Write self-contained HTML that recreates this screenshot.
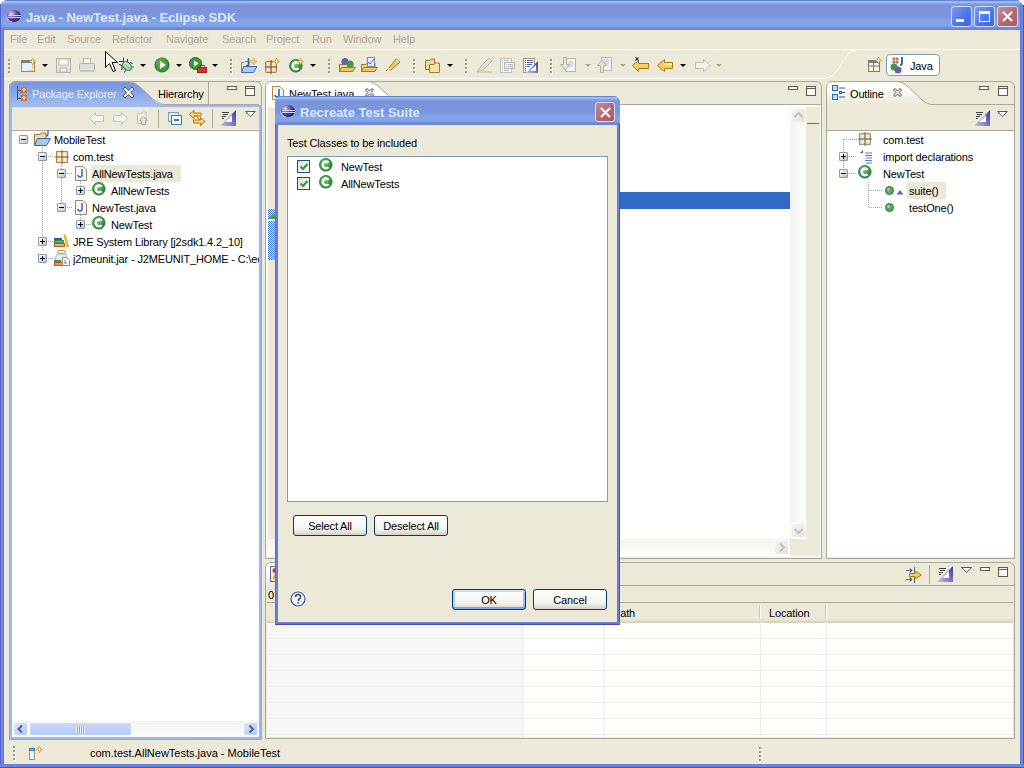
<!DOCTYPE html>
<html><head><meta charset="utf-8">
<style>
*{box-sizing:border-box;margin:0;padding:0}
html,body{width:1024px;height:768px;overflow:hidden;background:#ece9d8;font-family:"Liberation Sans",sans-serif;font-size:11px;color:#000}
.a{position:absolute}
svg.a{overflow:visible}
.t{position:absolute;white-space:nowrap;line-height:13px;letter-spacing:-0.15px}
#title{left:0;top:0;width:1024px;height:30px;background:linear-gradient(#6385d8 0px,#6385d8 1px,#a0b8e8 1px,#a0b8e8 3px,#88a6e3 3px,#7a94dd 5px,#7a94dd 16px,#80a6e8 21px,#80a6e8 26px,#7088da 28px,#6a80d6 30px);border-radius:7px 7px 0 0}
#lb{left:0;top:28px;width:4px;height:740px;background:linear-gradient(90deg,#5a64d0 0 1px,#6c84dc 1px 3px,#6078d8 3px)}
#rb{left:1020px;top:5px;width:4px;height:763px;background:linear-gradient(90deg,#6078d8 0 1px,#6c84dc 1px 3px,#4c50c0 3px)}
#bb{left:0;top:764px;width:1024px;height:4px;background:linear-gradient(#6a80dc 0 1px,#6c84dc 1px 3px,#4c50c0 3px)}
.menu{top:33px;color:#aca899}
.panel{position:absolute;border:1px solid #aca899;background:#ece9d8}
.white{position:absolute;background:#fff}
.wbtn{position:absolute;top:6px;width:21px;height:21px;border:1px solid #d4dcf4;border-radius:3px;background:linear-gradient(135deg,#7c9cf0,#4b74e6 60%,#3c68e0)}
.grip{position:absolute;width:2px;height:2px;border-radius:1px;background:#7d7a6e;box-shadow:1px 1px #fff,0 4px #7d7a6e,1px 5px #fff,0 8px #7d7a6e,1px 9px #fff,0 12px #7d7a6e,1px 13px #fff}
.dd{position:absolute;width:0;height:0;border-left:3px solid transparent;border-right:3px solid transparent;border-top:3px solid #000}
.ddg{border-top-color:#aca899}
.sep{position:absolute;width:1px;background:#aca899}
.bx{position:absolute;width:9px;height:9px;border:1px solid #7f9db9;border-radius:1px;background:linear-gradient(135deg,#fff,#c6c3b3)}
.bx::before{content:"";position:absolute;left:1px;top:3px;width:5px;height:1px;background:#000}
.bx.p::after{content:"";position:absolute;left:3px;top:1px;width:1px;height:5px;background:#000}
.dv{position:absolute;width:1px;background:repeating-linear-gradient(#a0a0a0 0 1px,transparent 1px 2px)}
.dh{position:absolute;height:1px;background:repeating-linear-gradient(90deg,#a0a0a0 0 1px,transparent 1px 2px)}
.minb{position:absolute;width:10px;height:4px;border:1px solid #5e5a50;background:#fff}
.maxb{position:absolute;width:10px;height:10px;border:1px solid #5e5a50;background:linear-gradient(#fff 0 1px,#5e5a50 1px 2px,#fff 2px)}
.btn{position:absolute;height:21px;border:1px solid #003c74;border-radius:3px;background:linear-gradient(#fff,#f3f3ef 70%,#d6d0c5);text-align:center;line-height:19px;padding-top:1px;letter-spacing:-0.15px}
.cb{position:absolute;width:13px;height:13px;border:1px solid #1c5180;background:linear-gradient(135deg,#dcdcd7,#fff)}
</style></head><body>
<svg width="0" height="0" style="position:absolute"><defs><radialGradient id="cg" cx=".4" cy=".35" r=".7"><stop offset="0" stop-color="#8cd08c"/><stop offset=".6" stop-color="#3a9a4a"/><stop offset="1" stop-color="#237a30"/></radialGradient>
<radialGradient id="eg" cx=".3" cy=".3" r=".8"><stop offset="0" stop-color="#f0e0f0"/><stop offset=".25" stop-color="#b080c0"/><stop offset=".5" stop-color="#5a4aa0"/><stop offset="1" stop-color="#1c1868"/></radialGradient>
<g id="eic"><ellipse cx="7" cy="6" rx="7" ry="6" fill="url(#eg)"/><path d="M0 6.5C0 9 2 12 5 12" stroke="#e0a0c8" stroke-width="1.5" fill="none" opacity=".8"/><rect x="1" y="5" width="13" height="1" fill="#c8d4f4"/><rect x="1" y="7" width="13" height="1" fill="#c8d4f4"/></g>
<g id="spk"><path d="M3.5 -0.3Q4.3 2.7 7.3 3.5Q4.3 4.3 3.5 7.3Q2.7 4.3 -0.3 3.5Q2.7 2.7 3.5 -0.3Z" fill="#c8961e"/><path d="M3.5 1.5V5.5M1.5 3.5H5.5" stroke="#fff6c8" stroke-width="1"/></g>
<g id="cic"><circle cx="6.8" cy="6.8" r="6.3" fill="url(#cg)" stroke="#2a7a36" stroke-width=".9"/><path d="M9.6 4.6A3.4 3.4 0 1 0 9.6 9.2" stroke="#fff" stroke-width="2.4" fill="none"/></g></defs></svg>
<!-- WINDOW FRAME -->
<div id="title" class="a"></div>
<div class="a" style="left:0;top:0;width:1px;height:3px;background:#fff"></div>
<svg class="a" style="left:7px;top:10px" width="15" height="13"><use href="#eic"/></svg>
<div class="t" style="left:26px;top:10px;letter-spacing:0;font-weight:bold;font-size:13px;line-height:15px;color:#dce6fa">Java - NewTest.java - Eclipse SDK</div>
<div class="wbtn" style="left:951px"><div class="a" style="left:4px;top:12px;width:8px;height:3px;background:#fff"></div></div>
<div class="wbtn" style="left:974px"><div class="a" style="left:4px;top:4px;width:11px;height:11px;border:1px solid #fff;border-top-width:3px"></div></div>
<div class="wbtn" style="left:997px;background:linear-gradient(135deg,#c98a9c,#b8646e 60%,#a85a60)"><svg class="a" style="left:4px;top:4px" width="11" height="11"><path d="M1 1L10 10M10 1L1 10" stroke="#fff" stroke-width="2"/></svg></div>
<div class="a" style="left:1019px;top:0;width:5px;height:5px;background:linear-gradient(45deg,transparent 50%,#fff 50%)"></div>
<div class="a" style="left:0;top:0;width:5px;height:5px;background:linear-gradient(-45deg,transparent 50%,#fff 50%)"></div>
<div class="a" style="left:0;top:4px;width:1px;height:24px;background:#5a64d0"></div><div id="lb" class="a"></div><div id="rb" class="a"></div><div id="bb" class="a"></div>

<!-- MENU -->
<div class="t menu" style="left:10px">File</div>
<div class="t menu" style="left:37px">Edit</div>
<div class="t menu" style="left:67px">Source</div>
<div class="t menu" style="left:112px">Refactor</div>
<div class="t menu" style="left:166px">Navigate</div>
<div class="t menu" style="left:222px">Search</div>
<div class="t menu" style="left:266px">Project</div>
<div class="t menu" style="left:312px">Run</div>
<div class="t menu" style="left:343px">Window</div>
<div class="t menu" style="left:393px">Help</div>
<div class="a" style="left:4px;top:49px;width:1016px;height:1px;background:#fff"></div>

<!-- TOOLBAR -->
<div class="a" style="left:4px;top:78px;width:819px;height:1px;background:#fff"></div>
<svg class="a" style="left:800px;top:49px" width="60" height="31"><path d="M22.5 29.5C32 29.5 36 24 42 14S50 1.5 56 1.5" stroke="#fff" fill="none"/></svg>
<div class="grip" style="left:8px;top:59px"></div>
<svg class="a" style="left:21px;top:58px" width="16" height="15"><rect x="0.5" y="2.5" width="13" height="11" fill="#e8f4fc" stroke="#9c8a5a"/><rect x="1" y="3" width="12" height="2" fill="#4a84c8"/><path d="M8 13C12 12 12 9 12 5" stroke="#f0c040" fill="none"/><use href="#spk" x="8" y="0"/></svg>
<div class="dd" style="left:42px;top:64px"></div>
<svg class="a" style="left:56px;top:58px" width="15" height="15"><rect x="0.5" y="0.5" width="14" height="14" fill="#e4e2da" stroke="#b4b2aa"/><rect x="3" y="1" width="9" height="6" fill="#f6f6f2" stroke="#c4c2ba"/><rect x="4" y="10" width="7" height="4" fill="#f0f0ee" stroke="#b8b6ae"/></svg>
<svg class="a" style="left:79px;top:58px" width="16" height="15"><rect x="4.5" y="0.5" width="7" height="7" fill="#fafafa" stroke="#b4b2aa"/><rect x="0.5" y="5.5" width="15" height="7" rx="1" fill="#e0ded6" stroke="#b4b2aa"/><rect x="1" y="12" width="14" height="2" fill="#c8c6be"/></svg>
<svg class="a" style="left:104px;top:50px" width="14" height="23"><path d="M1.5 1.5V17.5L5.5 13.5L9 21.5L11.5 20.5L8 12.5H13.5Z" fill="#fff" stroke="#000"/></svg>
<svg class="a" style="left:119px;top:57px" width="16" height="16"><defs><linearGradient id="bugg" x1="0" y1="0" x2="1" y2="1"><stop offset="0" stop-color="#f0fae8"/><stop offset="1" stop-color="#88c050"/></linearGradient></defs><path d="M4.5 1V5M0 4.5H4.5M8.5 2V5.5M0 7.5L3 8.5V12.5L2 13M6.5 13L5.5 15.5M11 5.5L13.5 6.5M12 9.5L14.5 10.5" stroke="#1a4a3a" fill="none"/><ellipse cx="8" cy="9" rx="5" ry="3.6" transform="rotate(45 8 9)" fill="url(#bugg)" stroke="#1a6a8a"/><path d="M6 7L10 11" stroke="#5aa040" stroke-dasharray="1 1"/></svg>
<div class="dd" style="left:140px;top:64px"></div>
<svg class="a" style="left:154px;top:57px" width="16" height="16"><circle cx="8" cy="8" r="7" fill="#3a9a3a" stroke="#1c6a20"/><circle cx="7" cy="6" r="5" fill="#60b850" opacity=".6"/><path d="M6 4V12L12 8Z" fill="#fff"/></svg>
<div class="dd" style="left:176px;top:64px"></div>
<svg class="a" style="left:189px;top:57px" width="18" height="17"><circle cx="6.5" cy="6.5" r="6" fill="#3a9a3a" stroke="#1c6a20"/><path d="M5 3.5V9.5L9.5 6.5Z" fill="#fff"/><rect x="8.5" y="10.5" width="9" height="5" fill="#d03838" stroke="#a02020"/><rect x="11" y="8.5" width="4" height="2" fill="none" stroke="#a02020"/></svg>
<div class="dd" style="left:212px;top:64px"></div>
<div class="grip" style="left:230px;top:59px"></div>
<svg class="a" style="left:241px;top:58px" width="17" height="16"><path d="M0.5 4.5H3L4 3.5H8V13.5H0.5Z" fill="#f8e8b0" stroke="#8a80b0"/><path d="M2.5 8.5H16L12.5 14.5H0.5Z" fill="#a8ccf4" stroke="#4a64b8"/><path d="M7.5 0V6Q7.5 8 5 8" stroke="#2a5aa8" stroke-width="1.6" fill="none"/><use href="#spk" x="9" y="0"/></svg>
<svg class="a" style="left:265px;top:58px" width="16" height="16"><rect x="0.5" y="3.5" width="11" height="11" rx="1" fill="#e8c8a0" stroke="#b07850"/><rect x="2" y="5" width="3" height="3" fill="#f8e8c8"/><rect x="7" y="5" width="3" height="3" fill="#f8e8c8"/><rect x="2" y="10" width="3" height="3" fill="#f8e8c8"/><rect x="7" y="10" width="3" height="3" fill="#f8e8c8"/><path d="M6 2V16M0 9H12" stroke="#7a4a30"/><use href="#spk" x="8" y="0"/></svg>
<svg class="a" style="left:289px;top:58px" width="16" height="15"><use href="#cic" y="1"/><use href="#spk" x="8" y="0"/></svg>
<div class="dd" style="left:310px;top:64px"></div>
<div class="grip" style="left:328px;top:59px"></div>
<svg class="a" style="left:339px;top:57px" width="17" height="16"><path d="M0.5 7.5H5L6 6H14V14.5H0.5Z" fill="#f4d890" stroke="#9c7a30"/><path d="M2.5 10.5H16.5L13.5 14.5H0.5Z" fill="#f0c860" stroke="#9c7a30"/><circle cx="6" cy="4.5" r="3.5" fill="#6a5ab0"/><circle cx="11" cy="7" r="3.5" fill="#3a9a4a"/></svg>
<svg class="a" style="left:361px;top:57px" width="17" height="16"><path d="M0.5 7.5H5L6 6H14V14.5H0.5Z" fill="#f4d890" stroke="#9c7a30"/><rect x="6.5" y="0.5" width="7" height="9" fill="#e8f0fc" stroke="#7a8ab0"/><path d="M7 5L9 7L13 2" stroke="#3a6ab0" fill="none"/><path d="M2.5 10.5H16.5L13.5 14.5H0.5Z" fill="#f0c860" stroke="#9c7a30"/></svg>
<svg class="a" style="left:385px;top:57px" width="16" height="16"><path d="M1 14L4 11L11 2L15 5L6 13Z" fill="#f0c860" stroke="#9c7a30"/><path d="M1 15L4 11L6 13Z" fill="#fffbe0"/><path d="M11 3L14 5" stroke="#fff"/></svg>
<div class="grip" style="left:413px;top:59px"></div>
<svg class="a" style="left:425px;top:58px" width="16" height="15"><path d="M0.5 2.5H5L6 1H9.5V11.5H0.5Z" fill="#f4d890" stroke="#9c7a30"/><path d="M4.5 6.5H9L10 5H14.5V14.5H4.5Z" fill="#f8e0a0" stroke="#9c7a30"/></svg>
<div class="dd" style="left:447px;top:64px"></div>
<div class="grip" style="left:465px;top:59px"></div>
<svg class="a" style="left:476px;top:57px" width="17" height="16"><path d="M1 15L5 9L13 1L16 4L8 12Z" fill="#e4e2da" stroke="#b8b6ae"/><path d="M1 15H16" stroke="#b8b6ae"/></svg>
<svg class="a" style="left:500px;top:58px" width="16" height="15"><rect x="0.5" y="0.5" width="11" height="14" fill="#fafafa" stroke="#c0beb8"/><path d="M2 2.5H3M2 4.5H3M2 6.5H3M2 8.5H3M2 10.5H3M2 12.5H3M4 2.5H9M4 12.5H9" stroke="#b8b8b8"/><rect x="4.5" y="4.5" width="10" height="6" fill="#fafafa" stroke="#b0b4b8"/><path d="M6 6.5H7M6 8.5H7M8 6.5H13M8 8.5H13" stroke="#b8b8b8"/></svg>
<svg class="a" style="left:523px;top:58px" width="16" height="15"><rect x="0.5" y="0.5" width="11" height="14" fill="#f4f8fe" stroke="#a89a60"/><path d="M2 2.5H3M2 4.5H3M2 6.5H3M2 8.5H3M2 10.5H3M2 12.5H3" stroke="#3a5aa0"/><path d="M4 2.5H10M4 4.5H10M4 6.5H9M4 8.5H7" stroke="#4a6aa8"/><path d="M3 15L15 3V15Z" fill="url(#vmg)"/><path d="M7 13L13 7V13Z" fill="#fff"/></svg>
<div class="grip" style="left:550px;top:59px"></div>
<svg class="a" style="left:560px;top:57px" width="18" height="16"><rect x="5.5" y="1.5" width="10" height="13" fill="#f2f2ee" stroke="#b8b6ae"/><path d="M8 5H13M8 7H13M8 9H13" stroke="#c8c6be"/><path d="M3.5 0.5V7.5H0.5L5 13L9.5 7.5H6.5V0.5Z" fill="#e8e6de" stroke="#b0aea6"/></svg>
<div class="dd ddg" style="left:585px;top:64px"></div>
<svg class="a" style="left:597px;top:57px" width="17" height="16"><rect x="4.5" y="0.5" width="10" height="13" fill="#f2f2ee" stroke="#b8b6ae"/><path d="M7 3H12M7 5H12M7 7H12" stroke="#c8c6be"/><path d="M3.5 15.5V8.5H0.5L5 3L9.5 8.5H6.5V15.5Z" fill="#e8e6de" stroke="#b0aea6"/></svg>
<div class="dd ddg" style="left:620px;top:64px"></div>
<svg class="a" style="left:632px;top:57px" width="18" height="16"><path d="M0.5 8.5L6.5 3.5V6.5H16.5V11.5H6.5V14.5Z" fill="#f8d060" stroke="#b07810"/><path d="M3 2H7M5 0V4M3.5 0.5L6.5 3.5M6.5 0.5L3.5 3.5" stroke="#2050a0"/></svg>
<svg class="a" style="left:657px;top:57px" width="17" height="16"><path d="M0.5 8.5L7.5 2.5V5.5H15.5V11.5H7.5V14.5Z" fill="#f8d060" stroke="#b07810"/><path d="M8 6H15V8H8Z" fill="#fff0b0"/></svg>
<div class="dd" style="left:680px;top:64px"></div>
<svg class="a" style="left:694px;top:57px" width="17" height="16"><path d="M16.5 8.5L9.5 2.5V5.5H1.5V11.5H9.5V14.5Z" fill="#f2f2ee" stroke="#c0beb6"/></svg>
<div class="dd ddg" style="left:716px;top:64px"></div>
<svg class="a" style="left:868px;top:57px" width="15" height="16"><rect x="0.5" y="3.5" width="11" height="11" fill="#f6f2e0" stroke="#8a7a50"/><rect x="1" y="4" width="10" height="2" fill="#4a84c8"/><path d="M1 9H11M5.5 6V14" stroke="#8a7a50"/><use href="#spk" x="7" y="0"/></svg>
<div class="a" style="left:886px;top:54px;width:54px;height:22px;border:1px solid #7f9db9;border-radius:4px;background:#fff"></div>
<svg class="a" style="left:890px;top:57px" width="18" height="17"><path d="M2 2H9M2 5H9M4 0V7M7 0V7" stroke="#a05a30"/><path d="M12 0V6Q12 8 10 8" stroke="#2060a0" stroke-width="1.8" fill="none"/><circle cx="4" cy="10" r="3.5" fill="#3a9a4a"/><circle cx="8" cy="13" r="3.5" fill="#6a5ab0"/></svg>
<div class="t" style="left:910px;top:60px">Java</div>


<!-- PACKAGE EXPLORER -->
<div class="panel" style="left:9px;top:81px;width:253px;height:659px;border-radius:6px 6px 0 0"></div>
<svg class="a" style="left:9px;top:81px" width="253" height="26"><defs><linearGradient id="tabg" x1="0" y1="0" x2="0" y2="1"><stop offset="0" stop-color="#7592dd"/><stop offset="1" stop-color="#a4c0f0"/></linearGradient></defs>
<path d="M0.5 26V7Q0.5 0.5 7 0.5H252" fill="none" stroke="#aca899"/>
<path d="M1 26V7Q1 1 7 1H119C124 1 127 3 131 6.3L140.5 15.1C144 18.3 148 24 156 24H252V26Z" fill="url(#tabg)"/>
<path d="M119 0.5C124 0.5 127 2.5 131 5.8L140.5 14.6C144 17.8 148 23.5 156 23.5H250" fill="none" stroke="#aca899"/>
<rect x="1" y="24" width="251" height="2" fill="#9cb8ee"/>
</svg>
<svg class="a" style="left:17px;top:86px" width="10" height="16"><path d="M0.5 0V14M0.5 4.5H4M0.5 12.5H4" stroke="#5a5a5a"/><rect x="4" y="1" width="6" height="6" fill="#c87838"/><rect x="4" y="9" width="6" height="6" fill="#c87838"/><path d="M5 3.5H9M5 11.5H9M7 2V6M7 10V14" stroke="#f8e8c0"/></svg>
<div class="t" style="left:32px;top:88px;color:#e4ecfa">Package Explorer</div>
<svg class="a" style="left:123px;top:87px" width="11" height="11"><path d="M2 2L9 9M9 2L2 9" stroke="#5a5a60" stroke-width="3.6" stroke-linecap="square"/><path d="M2 2L9 9M9 2L2 9" stroke="#fff" stroke-width="1.8" stroke-linecap="square"/></svg>
<div class="t" style="left:158px;top:88px">Hierarchy</div>
<div class="sep" style="left:208px;top:82px;height:22px"></div>
<div class="minb" style="left:227px;top:86px"></div>
<div class="maxb" style="left:245px;top:86px"></div>
<div class="a" style="left:10px;top:105px;width:2px;height:634px;background:#9cb8ee"></div>
<div class="a" style="left:259px;top:105px;width:2px;height:634px;background:#9cb8ee"></div>
<div class="a" style="left:10px;top:737px;width:251px;height:2px;background:#9cb8ee"></div>
<div class="a" style="left:12px;top:129px;width:247px;height:1px;background:#f4f1e4"></div><div class="a" style="left:12px;top:130px;width:247px;height:1px;background:#aca899"></div>
<div class="white" style="left:12px;top:131px;width:247px;height:590px"></div>
<!-- view toolbar -->
<svg class="a" style="left:89px;top:112px" width="15" height="13"><path d="M0.5 6.5L6.5 0.5V3.5H14.5V9.5H6.5V12.5Z" fill="#f4f4f0" stroke="#c4c2ba"/></svg>
<svg class="a" style="left:113px;top:112px" width="15" height="13"><path d="M14.5 6.5L8.5 0.5V3.5H0.5V9.5H8.5V12.5Z" fill="#f4f4f0" stroke="#c4c2ba"/></svg>
<svg class="a" style="left:137px;top:111px" width="14" height="14"><path d="M0.5 2.5H4L5 1H9V12.5H0.5Z" fill="#eeeee8" stroke="#c0beb6"/><path d="M6.5 5.5L10.5 9.5H8.5V13.5H4.5V9.5H2.5Z" fill="#e4e4de" stroke="#b0aea6"/></svg>
<div class="sep" style="left:158px;top:109px;height:19px"></div>
<svg class="a" style="left:168px;top:112px" width="14" height="13"><rect x="0.5" y="0.5" width="10" height="9" fill="#e0ecfc" stroke="#7a9ac8"/><rect x="3.5" y="3.5" width="10" height="9" fill="#f0f6fe" stroke="#4a74b0"/><path d="M6 8H11" stroke="#1a4a90" stroke-width="1.5"/></svg>
<svg class="a" style="left:189px;top:110px" width="17" height="16"><path d="M0.5 4.5L5 0.5V3H12V6H5V8.5Z" fill="#f8d868" stroke="#b07810"/><path d="M16 11.5L11.5 7.5V10H4.5V13H11.5V15.5Z" fill="#f8d868" stroke="#b07810"/><path d="M6 5L11 10" stroke="#b07810"/></svg>
<div class="sep" style="left:212px;top:109px;height:19px"></div>
<svg class="a" style="left:220px;top:110px" width="17" height="17"><defs><linearGradient id="vmg" x1="1" y1="0.3" x2="0" y2="1"><stop offset="0" stop-color="#4a48a8"/><stop offset="1" stop-color="#c8c8ec"/></linearGradient></defs><path d="M16 0V16H0Z" fill="url(#vmg)"/><path d="M12 5V12H5Z" fill="#fff"/><path d="M2 2.5H9M3 4.5H8M2 6.5H6M2 8.5H4" stroke="#404040"/></svg>
<svg class="a" style="left:245px;top:111px" width="11" height="6"><path d="M0.5 0.5H10.5L5.5 5.5Z" fill="#fff" stroke="#5a5a5a"/></svg>
<!-- tree -->
<div class="dv" style="left:42px;top:147px;height:104px"></div>
<div class="dv" style="left:61px;top:164px;height:44px"></div>
<div class="dv" style="left:80px;top:181px;height:10px"></div>
<div class="dv" style="left:80px;top:215px;height:10px"></div>
<div class="bx" style="left:19px;top:135px"></div>
<svg class="a" style="left:34px;top:130px" width="18" height="17"><path d="M0.5 4.5H6L7 3H12V14.5H0.5Z" fill="#f4dc98" stroke="#9c7a30"/><path d="M3.5 8.5H16.5L12.5 15.5H0.5Z" fill="#a8c8f0" stroke="#3a64b0"/><path d="M14 0V4Q14 6 12 6" stroke="#2a5aa0" stroke-width="1.2" fill="none"/></svg>
<div class="t" style="left:54px;top:134px">MobileTest</div>
<div class="bx" style="left:38px;top:152px"></div><div class="dh" style="left:48px;top:156px;width:6px"></div>
<svg class="a" style="left:55px;top:150px" width="14" height="14"><rect x="1.5" y="1.5" width="11" height="11" fill="#f0d8b0" stroke="#c87838"/><rect x="3" y="3" width="3" height="3" fill="#fcf0d8"/><rect x="8" y="3" width="3" height="3" fill="#fcf0d8"/><rect x="3" y="8" width="3" height="3" fill="#fcf0d8"/><rect x="8" y="8" width="3" height="3" fill="#fcf0d8"/><path d="M7 0V14M0 7H14" stroke="#8a5a38"/></svg>
<div class="t" style="left:73px;top:151px">com.test</div>
<div class="bx" style="left:57px;top:169px"></div><div class="dh" style="left:67px;top:173px;width:6px"></div>
<div class="a" style="left:91px;top:165px;width:90px;height:17px;background:#ece9d8"></div>
<svg class="a" style="left:75px;top:166px" width="12" height="15"><path d="M0.5 0.5H8L11.5 4V14.5H0.5Z" fill="#f4f4fa" stroke="#9c8a5a"/><path d="M7 3V9Q7 11 5 11Q3 11 3 9" stroke="#3a6ab8" stroke-width="1.5" fill="none"/></svg>
<div class="t" style="left:92px;top:168px">AllNewTests.java</div>
<div class="bx p" style="left:76px;top:186px"></div><div class="dh" style="left:86px;top:190px;width:6px"></div>
<svg class="a" style="left:92px;top:182px" width="14" height="14"><use href="#cic"/></svg>
<div class="t" style="left:111px;top:185px">AllNewTests</div>
<div class="bx" style="left:57px;top:203px"></div><div class="dh" style="left:67px;top:207px;width:6px"></div>
<svg class="a" style="left:75px;top:200px" width="12" height="15"><path d="M0.5 0.5H8L11.5 4V14.5H0.5Z" fill="#f4f4fa" stroke="#9c8a5a"/><path d="M7 3V9Q7 11 5 11Q3 11 3 9" stroke="#3a6ab8" stroke-width="1.5" fill="none"/></svg>
<div class="t" style="left:92px;top:202px">NewTest.java</div>
<div class="bx p" style="left:76px;top:220px"></div><div class="dh" style="left:86px;top:224px;width:6px"></div>
<svg class="a" style="left:92px;top:216px" width="14" height="14"><use href="#cic"/></svg>
<div class="t" style="left:111px;top:219px">NewTest</div>
<div class="bx p" style="left:38px;top:237px"></div><div class="dh" style="left:48px;top:241px;width:6px"></div>
<svg class="a" style="left:53px;top:234px" width="17" height="14"><rect x="1" y="4" width="8" height="2" fill="#2a5ab0"/><rect x="1.5" y="6.5" width="9" height="2.5" fill="#5ab880" stroke="#1a7a3a" stroke-width=".8"/><rect x="1.5" y="9.5" width="10" height="3" fill="#eca878" stroke="#b85a20"/><path d="M11.8 1.8L14.6 12" stroke="#e8a818" stroke-width="2.6" stroke-linecap="round"/><path d="M11.8 2L14.2 11" stroke="#f8d860" stroke-width=".8"/></svg>
<div class="t" style="left:73px;top:236px">JRE System Library [j2sdk1.4.2_10]</div>
<div class="bx p" style="left:38px;top:254px"></div><div class="dh" style="left:48px;top:258px;width:6px"></div>
<svg class="a" style="left:53px;top:250px" width="17" height="16"><rect x="4.5" y="0.5" width="8" height="3" rx="1.5" fill="#fff8d0" stroke="#c09a30"/><path d="M4.5 4Q2 6 2.5 13H14Q14.5 6 12.5 4Z" fill="#e4ecfa" stroke="#9ab0d8"/><rect x="1" y="10" width="7" height="2" fill="#3a9a4a"/><rect x="1.5" y="12.5" width="8" height="3" fill="#e89868" stroke="#b85a20"/><path d="M9.5 7.5H13.5L16.5 10.5V15.5H9.5Z" fill="#fff" stroke="#a88a50"/><path d="M11 11H13M11 13H14" stroke="#4a74c0"/></svg>
<div class="t" style="left:73px;top:253px;width:186px;overflow:hidden">j2meunit.jar - J2MEUNIT_HOME - C:\eclipse</div>
<!-- h scrollbar -->
<div class="a" style="left:12px;top:721px;width:247px;height:16px;background:linear-gradient(#f3f1ec,#fefefb)"></div>
<div class="a" style="left:13px;top:722px;width:15px;height:14px;border:1px solid #fff;border-radius:2px;background:linear-gradient(135deg,#dae4fc,#b4c8f8)"></div>
<svg class="a" style="left:17px;top:725px" width="7" height="8"><path d="M5 0.5L1.5 4L5 7.5" stroke="#4d6185" stroke-width="2" fill="none"/></svg>
<div class="a" style="left:29px;top:722px;width:103px;height:14px;border:1px solid #fff;border-radius:2px;background:linear-gradient(#c8d8fc,#b8ccf8)"></div>
<div class="a" style="left:76px;top:726px;width:9px;height:7px;background:repeating-linear-gradient(90deg,#eef4fe 0 1px,#8aa8e8 1px 2px)"></div>
<div class="a" style="left:243px;top:722px;width:15px;height:14px;border:1px solid #fff;border-radius:2px;background:linear-gradient(135deg,#dae4fc,#b4c8f8)"></div>
<svg class="a" style="left:248px;top:725px" width="7" height="8"><path d="M1.5 0.5L5 4L1.5 7.5" stroke="#4d6185" stroke-width="2" fill="none"/></svg>


<!-- EDITOR -->
<div class="panel" style="left:265px;top:81px;width:557px;height:478px;border-radius:6px 6px 0 0"></div>
<svg class="a" style="left:265px;top:81px" width="557" height="25">
<path d="M1 24V7Q1 1 7 1H102C107 1 110 3 114 6.3L123.5 15.1C127 18.3 131 24 139 24V24Z" fill="#fff"/>
<path d="M102 0.5C107 0.5 110 2.5 114 5.8L123.5 14.6C127 17.8 131 23.5 139 23.5H556" fill="none" stroke="#aca899"/>
</svg>
<svg class="a" style="left:272px;top:86px" width="12" height="15"><path d="M0.5 0.5H8L11.5 4V13.5H0.5Z" fill="#f0f4fc" stroke="#a88a40"/><path d="M7 3V9Q7 11 5 11Q3 11 3 9" stroke="#2a6ab0" stroke-width="1.6" fill="none"/></svg>
<div class="t" style="left:289px;top:88px;color:#000;letter-spacing:0">NewTest.java</div>
<svg class="a" style="left:364px;top:87px" width="11" height="11"><path d="M1.5 3L3 1.5L5.5 4L8 1.5L9.5 3L7 5.5L9.5 8L8 9.5L5.5 7L3 9.5L1.5 8L4 5.5Z" fill="#fff" stroke="#44423a" stroke-linejoin="miter"/></svg>
<div class="minb" style="left:788px;top:86px;width:10px"></div>
<div class="maxb" style="left:806px;top:86px;width:10px;height:10px"></div>
<div class="white" style="left:266px;top:105px;width:555px;height:452px"></div>
<div class="a" style="left:268px;top:107px;width:8px;height:432px;background:#ece9d8"></div>
<div class="a" style="left:276px;top:192px;width:514px;height:17px;background:#316ac5"></div>
<div class="a" style="left:268px;top:209px;width:7px;height:51px;background:repeating-conic-gradient(#316ac5 0 25%,#fff 0 50%) 0 0/2px 2px"></div>
<svg class="a" style="left:268px;top:212px" width="7" height="9"><path d="M0 7L7 1V7Z" fill="#3a9a3a"/><path d="M2 6L7 2" stroke="#80d080" stroke-width=".7"/><rect x="0" y="7" width="7" height="2" fill="#fff"/></svg>
<!-- vscroll -->
<div class="a" style="left:790px;top:107px;width:16px;height:432px;background:linear-gradient(90deg,#f3f1ec,#fefefb)"></div>
<div class="a" style="left:791px;top:108px;width:15px;height:15px;border:1px solid #fff;border-radius:2px;background:linear-gradient(135deg,#f4f4f0,#e4e2da)"></div>
<svg class="a" style="left:794px;top:112px" width="9" height="6"><path d="M0.5 5L4.5 1L8.5 5" stroke="#c4c2ba" stroke-width="2" fill="none"/></svg>
<div class="a" style="left:791px;top:523px;width:15px;height:15px;border:1px solid #fff;border-radius:2px;background:linear-gradient(135deg,#f4f4f0,#e4e2da)"></div>
<svg class="a" style="left:794px;top:528px" width="9" height="6"><path d="M0.5 1L4.5 5L8.5 1" stroke="#c4c2ba" stroke-width="2" fill="none"/></svg>
<div class="a" style="left:806px;top:107px;width:14px;height:449px;background:#ece9d8"></div>
<div class="a" style="left:807px;top:123px;width:12px;height:1px;background:#6a6a8a"></div>
<!-- hscroll -->
<div class="a" style="left:266px;top:539px;width:524px;height:17px;background:linear-gradient(#f3f1ec,#fefefb)"></div>
<div class="a" style="left:790px;top:539px;width:16px;height:17px;background:#ece9d8"></div>
<div class="a" style="left:774px;top:540px;width:15px;height:15px;border:1px solid #fff;border-radius:2px;background:linear-gradient(135deg,#f4f4f0,#e4e2da)"></div>
<svg class="a" style="left:779px;top:543px" width="6" height="9"><path d="M1 0.5L5 4.5L1 8.5" stroke="#c4c2ba" stroke-width="2" fill="none"/></svg>


<!-- OUTLINE -->
<div class="panel" style="left:826px;top:81px;width:189px;height:478px;border-radius:6px 6px 0 0"></div>
<svg class="a" style="left:826px;top:81px" width="190" height="25"><defs><linearGradient id="wtab" x1="0" y1="0" x2="0" y2="1"><stop offset="0" stop-color="#fff"/><stop offset=".2" stop-color="#fff"/><stop offset="1" stop-color="#ece9d8"/></linearGradient></defs>
<path d="M1 24V7Q1 1 7 1H70C75 1 78 3 82 6.3L91.5 15.1C95 18.3 99 24 107 24V24H1Z" fill="url(#wtab)"/>
<path d="M70 0.5C75 0.5 78 2.5 82 5.8L91.5 14.6C95 17.8 99 23.5 107 23.5H189" fill="none" stroke="#aca899"/>
</svg>
<svg class="a" style="left:832px;top:85px" width="14" height="15"><rect x="0.5" y="0.5" width="5" height="5" fill="#c4dcf8" stroke="#2a6ac0"/><rect x="0.5" y="9.5" width="5" height="5" fill="#c4dcf8" stroke="#2a6ac0"/><path d="M7 3H13M7 12H13M10 7.5H13" stroke="#2a5aa0"/><rect x="7.5" y="6.5" width="2" height="2" fill="none" stroke="#2a5aa0"/></svg>
<div class="t" style="left:850px;top:88px">Outline</div>
<svg class="a" style="left:892px;top:87px" width="11" height="11"><path d="M1.5 3L3 1.5L5.5 4L8 1.5L9.5 3L7 5.5L9.5 8L8 9.5L5.5 7L3 9.5L1.5 8L4 5.5Z" fill="#fff" stroke="#44423a" stroke-linejoin="miter"/></svg>
<div class="minb" style="left:979px;top:86px"></div>
<div class="maxb" style="left:998px;top:86px"></div>
<svg class="a" style="left:974px;top:110px" width="17" height="17"><defs><linearGradient id="vmg" x1="1" y1="0.3" x2="0" y2="1"><stop offset="0" stop-color="#4a48a8"/><stop offset="1" stop-color="#c8c8ec"/></linearGradient></defs><path d="M16 0V16H0Z" fill="url(#vmg)"/><path d="M12 5V12H5Z" fill="#fff"/><path d="M2 2.5H9M3 4.5H8M2 6.5H6M2 8.5H4" stroke="#404040"/></svg>
<svg class="a" style="left:997px;top:111px" width="11" height="6"><path d="M0.5 0.5H10.5L5.5 5.5Z" fill="#fff" stroke="#5a5a5a"/></svg>
<div class="a" style="left:827px;top:130px;width:188px;height:1px;background:#aca899"></div>
<div class="white" style="left:827px;top:131px;width:187px;height:426px"></div>
<div class="dv" style="left:843px;top:139px;height:34px"></div>
<div class="dh" style="left:844px;top:139px;width:14px"></div>
<svg class="a" style="left:858px;top:132px" width="14" height="14"><rect x="1.5" y="1.5" width="11" height="11" fill="#d8d4b8" stroke="#a09a78"/><rect x="3" y="3" width="3" height="3" fill="#ecead8"/><rect x="8" y="3" width="3" height="3" fill="#ecead8"/><rect x="3" y="8" width="3" height="3" fill="#ecead8"/><rect x="8" y="8" width="3" height="3" fill="#ecead8"/><path d="M7 0V14M0 7H14" stroke="#6a6448"/></svg>
<div class="t" style="left:883px;top:134px">com.test</div>
<div class="bx p" style="left:839px;top:152px"></div><div class="dh" style="left:849px;top:156px;width:8px"></div>
<svg class="a" style="left:859px;top:149px" width="14" height="15"><path d="M1 4L4 1V4Z" fill="#2a5aa0"/><path d="M6 4H13M6 6.5H13M7 9H13M6 11.5H13M7 14H13" stroke="#5a7ab8"/></svg>
<div class="t" style="left:883px;top:151px">import declarations</div>
<div class="bx" style="left:839px;top:169px"></div><div class="dh" style="left:849px;top:173px;width:8px"></div>
<svg class="a" style="left:858px;top:165px" width="14" height="14"><use href="#cic"/></svg>
<div class="t" style="left:883px;top:168px">NewTest</div>
<div class="dv" style="left:868px;top:182px;height:26px"></div>
<div class="dh" style="left:869px;top:190px;width:14px"></div>
<div class="dh" style="left:869px;top:207px;width:14px"></div>
<svg class="a" style="left:885px;top:186px" width="10" height="10"><circle cx="4.5" cy="4.5" r="4" fill="#5aa860" stroke="#2a7a30"/><circle cx="3.5" cy="3.5" r="1.5" fill="#a0d8a0"/></svg>
<svg class="a" style="left:896px;top:189px" width="8" height="6"><path d="M0.5 5.5L4 1L7.5 5.5Z" fill="#7a5ac0"/></svg>
<div class="a" style="left:907px;top:182px;width:39px;height:17px;background:#ece9d8"></div>
<div class="t" style="left:909px;top:185px">suite()</div>
<svg class="a" style="left:885px;top:203px" width="10" height="10"><circle cx="4.5" cy="4.5" r="4" fill="#5aa860" stroke="#2a7a30"/><circle cx="3.5" cy="3.5" r="1.5" fill="#a0d8a0"/></svg>
<div class="t" style="left:909px;top:202px">testOne()</div>


<!-- BOTTOM -->
<div class="panel" style="left:265px;top:562px;width:750px;height:177px;border-radius:6px 6px 0 0"></div>
<svg class="a" style="left:265px;top:562px" width="750" height="24">
<path d="M1 24V7Q1 1 7 1H60V24Z" fill="url(#wtab)"/>
<path d="M75 23.5H750" stroke="#aca899"/>
</svg>
<svg class="a" style="left:270px;top:566px" width="12" height="16"><rect x="0.5" y="0.5" width="11" height="15" fill="#f0f4fc" stroke="#5a6a98"/><circle cx="5" cy="4.5" r="2.5" fill="#e03030"/><path d="M2 13L5 8L8 13Z" fill="#f0a020"/></svg>
<div class="t" style="left:268px;top:589px">0 errors, 0 warnings, 0 infos</div>
<div class="a" style="left:267px;top:602px;width:746px;height:1px;background:#aca899"></div>
<div class="a" style="left:267px;top:619px;width:746px;height:4px;background:linear-gradient(#ece9d8,#e4e0d0 40%,#d0cbb8)"></div>
<div class="sep" style="left:759px;top:605px;height:14px;background:#cbc7b8"></div><div class="a" style="left:760px;top:605px;width:1px;height:14px;background:#fff"></div>
<div class="sep" style="left:825px;top:605px;height:14px;background:#cbc7b8"></div><div class="a" style="left:826px;top:605px;width:1px;height:14px;background:#fff"></div>
<div class="t" style="left:613px;top:607px">Path</div>
<div class="t" style="left:769px;top:607px">Location</div>
<div class="a" style="left:267px;top:623px;width:746px;height:114px;background:#fff"></div>
<div class="a" style="left:267px;top:623px;width:256px;height:114px;background:#f6f6f5"></div>
<div class="a" style="left:267px;top:623px;width:746px;height:114px;background:repeating-linear-gradient(transparent 0 15px,#f0eee4 15px 16px)"></div>
<div class="a" style="left:523px;top:622px;width:1px;height:115px;background:#f0eee4"></div>
<div class="a" style="left:604px;top:622px;width:1px;height:115px;background:#f0eee4"></div>
<div class="a" style="left:760px;top:622px;width:1px;height:115px;background:#f0eee4"></div>
<div class="a" style="left:826px;top:622px;width:1px;height:115px;background:#f0eee4"></div>
<svg class="a" style="left:906px;top:567px" width="17" height="16"><path d="M0 3.5H6M4 1.5L6 3.5L4 5.5M8.5 0V7M0 12.5H6M4 10.5L6 12.5L4 14.5M8.5 9V16" stroke="#4a6a90"/><path d="M3.5 6.5H9V4L15.5 8L9 12V9.5H3.5Z" fill="#f8d060" stroke="#b07810"/></svg>
<div class="sep" style="left:929px;top:565px;height:19px"></div>
<svg class="a" style="left:937px;top:566px" width="17" height="17"><defs><linearGradient id="vmg" x1="1" y1="0.3" x2="0" y2="1"><stop offset="0" stop-color="#4a48a8"/><stop offset="1" stop-color="#c8c8ec"/></linearGradient></defs><path d="M16 0V16H0Z" fill="url(#vmg)"/><path d="M12 5V12H5Z" fill="#fff"/><path d="M2 2.5H9M3 4.5H8M2 6.5H6M2 8.5H4" stroke="#404040"/></svg>
<svg class="a" style="left:961px;top:567px" width="11" height="6"><path d="M0.5 0.5H10.5L5.5 5.5Z" fill="#fff" stroke="#5a5a5a"/></svg>
<div class="minb" style="left:980px;top:567px"></div>
<div class="maxb" style="left:998px;top:567px"></div>


<!-- STATUS -->
<div class="grip" style="left:13px;top:746px"></div>
<svg class="a" style="left:29px;top:746px" width="15" height="15"><defs><linearGradient id="sfg" x1="0" y1="0" x2="0" y2="1"><stop offset="0" stop-color="#fff"/><stop offset="1" stop-color="#d8f0fc"/></linearGradient></defs><rect x="0.5" y="2.5" width="5" height="11" fill="url(#sfg)" stroke="#a89860"/><rect x="0" y="2" width="6" height="3" fill="#3a78c0"/><path d="M1 3.5H5" stroke="#8ab8e8"/><use href="#spk" x="7" y="0"/></svg>
<div class="grip" style="left:759px;top:747px"></div>
<div class="t" style="left:90px;top:747px;letter-spacing:0">com.test.AllNewTests.java - MobileTest</div>

<!-- DIALOG -->
<div class="a" style="left:275px;top:96px;width:345px;height:529px;border-radius:6px 6px 0 0;background:linear-gradient(#6385d8 0px,#6385d8 1px,#a0b8e8 1px,#a0b8e8 3px,#88a6e3 3px,#7a94dd 5px,#7a94dd 16px,#80a6e8 21px,#80a6e8 25px,#7088da 27px,#6a80d6 29px,#6a80d6 100%)"></div>
<div class="a" style="left:275px;top:124px;width:3px;height:501px;background:linear-gradient(90deg,#5a68d2 0 1px,#6e84de 1px 2px,#6478da 2px)"></div>
<div class="a" style="left:617px;top:124px;width:3px;height:501px;background:linear-gradient(90deg,#6478da 0 1px,#6e84de 1px 2px,#4a50c4 2px)"></div>
<div class="a" style="left:275px;top:622px;width:345px;height:3px;background:linear-gradient(#6e84de 0 1px,#6474d8 1px 2px,#4848c0 2px)"></div>
<div class="a" style="left:278px;top:125px;width:339px;height:497px;background:#ece9d8"></div>
<svg class="a" style="left:281px;top:105px" width="15" height="13"><use href="#eic"/></svg>
<div class="t" style="left:300px;top:105px;letter-spacing:0;font-weight:bold;font-size:13px;line-height:15px;color:#dce6fa">Recreate Test Suite</div>
<div class="wbtn" style="left:595px;top:102px;width:20px;height:20px;background:linear-gradient(135deg,#c98a9c,#b8646e 60%,#a85a60)"><svg class="a" style="left:4px;top:4px" width="11" height="11"><path d="M1 1L10 10M10 1L1 10" stroke="#fff" stroke-width="2"/></svg></div>
<div class="t" style="left:287px;top:137px">Test Classes to be included</div>
<div class="white" style="left:287px;top:156px;width:321px;height:346px;border:1px solid #7f9db9"></div>
<div class="cb" style="left:297px;top:160px"><svg class="a" style="left:2px;top:2px" width="8" height="8"><path d="M0.5 3.5L3 6L7.5 1" stroke="#21a121" stroke-width="2" fill="none"/></svg></div>
<svg class="a" style="left:319px;top:158px" width="14" height="14"><use href="#cic"/></svg>
<div class="t" style="left:341px;top:161px">NewTest</div>
<div class="cb" style="left:297px;top:177px"><svg class="a" style="left:2px;top:2px" width="8" height="8"><path d="M0.5 3.5L3 6L7.5 1" stroke="#21a121" stroke-width="2" fill="none"/></svg></div>
<svg class="a" style="left:319px;top:175px" width="14" height="14"><use href="#cic"/></svg>
<div class="t" style="left:341px;top:178px">AllNewTests</div>
<div class="btn" style="left:293px;top:515px;width:74px">Select All</div>
<div class="btn" style="left:374px;top:515px;width:74px">Deselect All</div>
<svg class="a" style="left:290px;top:591px" width="16" height="16"><circle cx="8" cy="8" r="7" fill="#f4f8fc" stroke="#3a5a88" stroke-width="1.2"/><path d="M5.5 6Q5.5 3.5 8 3.5T10.5 6Q10.5 7.5 8.5 8.5V10" stroke="#2a4a78" stroke-width="1.5" fill="none"/><rect x="7.3" y="11" width="1.6" height="1.6" fill="#2a4a78"/></svg>
<div class="btn" style="left:452px;top:589px;width:74px;box-shadow:inset 0 2px 0 #c8dcfc,inset 0 -2px 0 #7aa4ee,inset 2px 0 0 #b0ccf8,inset -2px 0 0 #98bcf4">OK</div>
<div class="btn" style="left:533px;top:589px;width:74px">Cancel</div>

</body></html>
